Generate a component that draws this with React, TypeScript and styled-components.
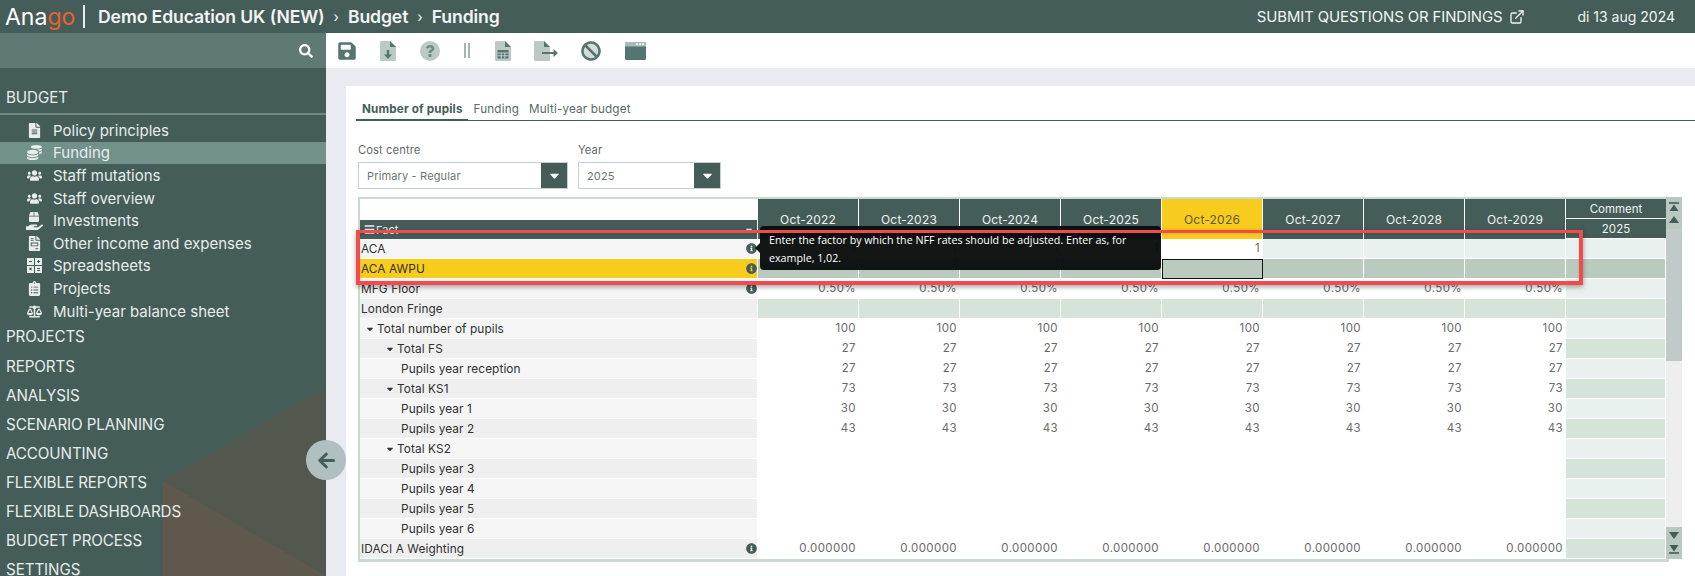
import React from "react";
import styled, { createGlobalStyle } from "styled-components";
import {
  FaSearch, FaFileAlt, FaCoins, FaUsers, FaFileInvoice, FaClipboardList, FaBalanceScale,
  FaSave, FaQuestion, FaBan, FaHandHolding, FaBox, FaInfoCircle, FaCaretDown, FaArrowLeft, FaBars,
} from "react-icons/fa";
import { FiExternalLink } from "react-icons/fi";

const GlobalStyle = createGlobalStyle`
  html, body { margin: 0; padding: 0; height: 100%; overflow: hidden; background: #fff; }
  * { box-sizing: border-box; }
  body { font-family: "Inter", "Liberation Sans", sans-serif; }
`;

const Page = styled.div`
  width: 1695px; height: 576px; display: flex; flex-direction: column; overflow: hidden; position: relative;
`;
const Header = styled.header`
  height: 33px; flex: none; background: #445d59; color: #f1f5f4; display: flex; align-items: center; padding-left: 5px;
`;
const Logo = styled.span`
  font-size: 23px; font-weight: 400; letter-spacing: 0; width: 69px; color: #fff;
`;
const LogoAccent = styled.span` color: #e8622c; `;
const LogoBar = styled.span` width: 2px; height: 23px; background: #e8eeec; margin: 0 13px 0 9px; `;
const Crumb = styled.span` font-size: 17.6px; font-weight: 600; letter-spacing: -0.1px; `;
const CrumbSep = styled.span` font-size: 14px; font-weight: 400; margin: 0 9px; `;
const HeaderRight = styled.div`
  margin-left: auto; display: flex; align-items: center; font-size: 14px; font-weight: 400; padding-right: 20px;
`;
const SubmitLink = styled.span` display: flex; align-items: center; gap: 7px; margin-right: 52px; letter-spacing: -0.1px; font-size: 14.9px; `;

const Body = styled.div` flex: 1; display: flex; min-height: 0; `;
const Sidebar = styled.aside`
  width: 326px; flex: none; background: #445d59; position: relative; overflow: hidden; color: #e6edeb;
`;
const DecoUpper = styled.div`
  position: absolute; inset: 0; background: #52584d;
  clip-path: polygon(326px 354px, 163px 448px, 326px 543px);
`;
const DecoLower = styled.div`
  position: absolute; inset: 0; background: #5f594d;
  clip-path: polygon(163px 448px, 326px 543px, 163px 543px);
`;
const SearchBar = styled.div`
  height: 35px; background: #5f7a74; display: flex; align-items: center; justify-content: flex-end; padding-right: 13px; color: #fff; font-size: 14px; position: relative;
`;
const Menu = styled.nav` position: relative; padding-top: 15px; `;
const SectionTitle = styled.div`
  font-size: 15.2px; height: 29.1px; line-height: 29px; padding-left: 6px; letter-spacing: -0.1px; font-weight: 400;
`;
const SectionRule = styled.div` height: 2px; background: #6f8a85; margin-top: 1px; margin-bottom: 4px; `;
const Item = styled.div<{ $active?: boolean }>`
  height: 22.6px; display: flex; align-items: center; font-size: 15px;
  background: ${(p) => (p.$active ? "#72918b" : "transparent")};
`;
const ItemIcon = styled.span`
  width: 53px; padding-left: 24px; display: flex; align-items: center; justify-content: center; font-size: 15px; flex: none; padding-right: 8px;
`;
const HandStack = styled.span` position: relative; width: 17px; height: 16px; display: block; `;
const HandBox = styled(FaBox)` position: absolute; left: 3px; top: -1px; font-size: 10px; `;
const HandPalm = styled(FaHandHolding)` position: absolute; left: 0; bottom: -2px; font-size: 17px; `;
const Collapse = styled.button`
  position: absolute; left: 306px; top: 440px; width: 40px; height: 40px; border-radius: 50%; border: 0; background: #b0bfbf; color: #445d59; font-size: 19px; display: flex; align-items: center; justify-content: center; z-index: 4; padding: 0;
`;

const Main = styled.main` flex: 1; display: flex; flex-direction: column; min-width: 0; `;
const Toolbar = styled.div` height: 35px; flex: none; background: #fff; display: flex; align-items: center; `;
const ToolSlot = styled.span<{ $x: number; $w: number }>`
  margin-left: ${(p) => p.$x}px; width: ${(p) => p.$w}px; display: flex; justify-content: center; align-items: center; color: #557570;
`;
const QuestionDisc = styled.span`
  width: 20px; height: 20px; border-radius: 50%; background: #bccac6; color: #6f8a85; display: flex; align-items: center; justify-content: center; font-size: 12px;
`;
const BanDisc = styled.span`
  width: 20px; height: 20px; border-radius: 50%; background: #d3dedb; display: flex; align-items: center; justify-content: center;
`;
const Content = styled.div` flex: 1; background: #eaebf0; padding: 18px 0 0 20px; min-height: 0; `;
const Card = styled.div` background: #fff; height: 100%; padding: 16px 0 0 10px; `;
const Tabs = styled.div` display: flex; height: 19px; border-bottom: 1px solid #445d59; font-size: 11.7px; `;
const Tab = styled.div<{ $active?: boolean }>`
  height: 19px; padding: 0 4px 0 6px; line-height: 15px; color: #5a6a68; letter-spacing: 0.15px;
  ${(p) => p.$active && "font-weight: 700; color: #445d59; border-bottom: 2px solid #445d59; padding-right: 5px;"}
`;
const Filters = styled.div` display: flex; gap: 10px; margin: 22px 0 8px 2px; `;
const Filter = styled.div<{ $w: number }>` width: ${(p) => p.$w}px; `;
const FilterLabel = styled.div` font-size: 11.2px; color: #5f6b69; height: 19px; line-height: 15px; letter-spacing: 0.1px; `;
const Select = styled.div`
  height: 27px; border: 1px solid #c5d0d3; display: flex; align-items: center; justify-content: space-between; font-size: 11px; color: #6a7573; padding-left: 8px; letter-spacing: 0.15px;
`;
const SelectBtn = styled.span`
  width: 26px; height: 25px; background: #445d59; color: #fff; display: flex; align-items: center; justify-content: center; font-size: 15px;
`;

const Frame = styled.div`
  margin-left: 2px; width: 1311px; position: relative; border: solid #c9dace; border-width: 2px 3px 3px 2px; background: #fff;
`;
const Grid = styled.div`
  display: grid; grid-template-columns: 398px repeat(8, 101px) 100px; grid-auto-rows: 20px; font-size: 11.8px;
`;
const FactHead = styled.div`
  grid-row: 1 / span 2; display: flex; flex-direction: column; justify-content: flex-end; border-right: 1px solid #fff;
`;
const FactBar = styled.div`
  height: 19px; background: #445d59; color: #eef3f1; font-size: 11px; display: flex; align-items: center; padding: 0 3px 0 4px; justify-content: space-between;
`;
const FactName = styled.span` display: flex; align-items: center; gap: 1px; `;
const Month = styled.div<{ $hl?: boolean }>`
  grid-row: 1 / span 2; background: ${(p) => (p.$hl ? "#f8cc1c" : "#445d59")}; color: ${(p) => (p.$hl ? "#5e5a2a" : "#eef3f1")};
  display: flex; align-items: center; justify-content: center; border-right: 1px solid #fff; font-size: 12px; letter-spacing: 0.2px;
`;
const CommentHead = styled.div`
  background: #445d59; color: #eef3f1; display: flex; align-items: center; justify-content: center; font-size: 11.5px; border-bottom: 1px solid #fff; height: 20px;
`;
const Label = styled.div<{ $tone: string; $indent: number }>`
  background: ${(p) => p.$tone}; border-right: 1px solid #fff; border-bottom: 1px solid #fff; color: #2f2f2f; display: flex; align-items: center; padding-left: ${(p) => p.$indent}px; padding-right: 0; position: relative; letter-spacing: 0.1px;
`;
const Caret = styled(FaCaretDown)` font-size: 10px; margin-right: 2px; margin-left: -2px; color: #333; flex: none; `;
const Info = styled(FaInfoCircle)` margin-left: auto; font-size: 11px; color: #445d59; flex: none; `;
const Cell = styled.div<{ $bg: string; $selected?: boolean }>`
  background: ${(p) => p.$bg}; border-right: 1px solid #fff; border-bottom: 1px solid #fff; text-align: right; padding-right: 2px; line-height: 19px; color: #6a6a6a; font-size: 11.5px; letter-spacing: 0.4px;
  ${(p) => p.$selected && "outline: 1px solid #111; outline-offset: -1px;"}
`;

const Scrollbar = styled.div`
  position: absolute; left: 1306px; top: -2px; width: 16px; bottom: 0; background: #eee; display: flex; flex-direction: column; color: #445d59; font-size: 0;
`;
const ThumbTop = styled.div` height: 164px; background: #c0cbc9; display: flex; flex-direction: column; flex: none; `;
const ScrollCaps = styled.div<{ $h: number }>` height: ${(p) => p.$h}px; background: #b9c9c0; display: flex; flex-direction: column; align-items: center; justify-content: space-around; flex: none; padding: 3px 0; `;
const Spacer = styled.div` flex: 1; `;

const Tooltip = styled.div`
  position: absolute; left: 400px; top: 27px; width: 401px; height: 44px; background: rgba(10, 12, 12, 0.96); color: #fff; font-family: "Open Sans", sans-serif; font-size: 10.7px; line-height: 18px; padding: 5px 8px 0 9px; border-radius: 4px; z-index: 2;
  &::before { content: ""; position: absolute; left: -5px; top: 17px; border: 5px solid transparent; border-left: 0; border-right-color: rgba(10, 12, 12, 0.96); }
`;
const RedBox = styled.div`
  position: absolute; left: -4px; top: 31px; width: 1227px; height: 55px; border: solid #f24b4b; border-width: 3px 4px 4px 4px; box-shadow: 0 2px 5px rgba(0,0,0,0.35), inset 0 1px 3px rgba(0,0,0,0.12); z-index: 3; pointer-events: none;
`;

const months = ["Oct-2022", "Oct-2023", "Oct-2024", "Oct-2025", "Oct-2026", "Oct-2027", "Oct-2028", "Oct-2029"];
const E1 = "#e8f1ed", D1 = "#d5e3d9", G1 = "#bacabf";

type Row = { name: string; indent: number; caret?: boolean; info?: boolean; hl?: boolean; val: string; bg?: string };
const rows: Row[] = [
  { name: "ACA", indent: 1, info: true, val: "1" },
  { name: "ACA AWPU", indent: 1, info: true, hl: true, val: "", bg: G1 },
  { name: "MFG Floor", indent: 1, info: true, val: "0.50%" },
  { name: "London Fringe", indent: 1, val: "", bg: D1 },
  { name: "Total number of pupils", indent: 7, caret: true, val: "100" },
  { name: "Total FS", indent: 27, caret: true, val: "27" },
  { name: "Pupils year reception", indent: 41, val: "27" },
  { name: "Total KS1", indent: 27, caret: true, val: "73" },
  { name: "Pupils year 1", indent: 41, val: "30" },
  { name: "Pupils year 2", indent: 41, val: "43" },
  { name: "Total KS2", indent: 27, caret: true, val: "" },
  { name: "Pupils year 3", indent: 41, val: "" },
  { name: "Pupils year 4", indent: 41, val: "" },
  { name: "Pupils year 5", indent: 41, val: "" },
  { name: "Pupils year 6", indent: 41, val: "" },
  { name: "IDACI A Weighting", indent: 1, info: true, val: "0.000000" },
];

function cellBg(r: number, c: number, row: Row): string {
  if (r === 0) return c < 5 ? "#fff" : E1;
  return row.bg ?? "#fff";
}
function cellValue(r: number, c: number, row: Row): string {
  if (r === 0 && c >= 5) return "";
  return row.val;
}
function commentBg(r: number, row: Row): string {
  if (row.bg) return row.bg;
  return r % 2 === 0 ? E1 : D1;
}

const FileDown = () => (
  <svg width="16" height="20" viewBox="0 0 16 20"><path d="M0 1a1 1 0 0 1 1-1h9l6 6v13a1 1 0 0 1-1 1H1a1 1 0 0 1-1-1z" fill="#bccac6"/><path d="M10 0l6 6h-6z" fill="#557570"/><path d="M6.8 9h2.4v4.5H12L8 18l-4-4.5h2.8z" fill="#557570"/></svg>
);
const FileCalc = () => (
  <svg width="16" height="20" viewBox="0 0 16 20"><path d="M0 1a1 1 0 0 1 1-1h9l6 6v13a1 1 0 0 1-1 1H1a1 1 0 0 1-1-1z" fill="#bccac6"/><path d="M10 0l6 6h-6z" fill="#557570"/><path d="M2.5 9h11v8.5h-11z" fill="#557570"/><path d="M2.5 12h11M2.5 14.8h11M6.2 12v5.5M9.8 12v5.5" stroke="#d8e2df" strokeWidth="0.8"/></svg>
);
const FileOut = () => (
  <svg width="24" height="20" viewBox="0 0 24 20"><path d="M0 1a1 1 0 0 1 1-1h9l6 6v13a1 1 0 0 1-1 1H1a1 1 0 0 1-1-1z" fill="#bccac6"/><path d="M10 0l6 6h-6z" fill="#557570"/><path d="M8 11h11.5V8l4.5 4-4.5 4v-3H8z" fill="#557570"/></svg>
);
const Bars = () => (
  <svg width="6" height="15" viewBox="0 0 6 15"><path d="M1 0v15M5 0v15" stroke="#7f9692" strokeWidth="1.4"/></svg>
);
const WindowIcon = () => (
  <svg width="21" height="18" viewBox="0 0 21 18"><rect x="0" y="0" width="21" height="18" rx="1.5" fill="#557570"/><path d="M0 1.5A1.5 1.5 0 0 1 1.5 0h18A1.5 1.5 0 0 1 21 1.5V4.5H0z" fill="#a9bab6"/><circle cx="12" cy="2.2" r="1" fill="#fff"/><circle cx="15" cy="2.2" r="1" fill="#fff"/><circle cx="18" cy="2.2" r="1" fill="#fff"/></svg>
);
const GridCalc = () => (
  <svg width="15" height="15" viewBox="0 0 15 15"><path d="M0 0h7v7H0zM8 0h7v7H8zM0 8h7v7H0zM8 8h7v7H8z" fill="currentColor"/><path d="M2 3h3v1H2zM10 3h3v1h-3zM11 2h1v3h-1zM2.2 10.2l.7-.7 2 2-.7.7zM4.2 9.5l.7.7-2 2-.7-.7zM10 10h3v1h-3zM10 12h3v1h-3z" fill="#445d59"/></svg>
);
const ScrollEnd = ({ up }: { up?: boolean }) => (
  <svg width="12" height="10" viewBox="0 0 12 10"><g transform={up ? "" : "translate(0 10) scale(1 -1)"}><path d="M1 1h10" stroke="#445d59" strokeWidth="1.6"/><path d="M6 2.5l4.5 6.5h-9z" fill="#445d59"/></g></svg>
);
const ScrollArrow = ({ up }: { up?: boolean }) => (
  <svg width="12" height="8" viewBox="0 0 12 8"><path d={up ? "M6 0l5 7H1z" : "M6 7L1 0h10z"} fill="#445d59"/></svg>
);

const sideItems: { name: string; icon: React.ReactNode; active?: boolean }[] = [
  { name: "Policy principles", icon: <FaFileAlt /> },
  { name: "Funding", icon: <FaCoins />, active: true },
  { name: "Staff mutations", icon: <FaUsers /> },
  { name: "Staff overview", icon: <FaUsers /> },
  { name: "Investments", icon: <HandStack><HandBox /><HandPalm /></HandStack> },
  { name: "Other income and expenses", icon: <FaFileInvoice /> },
  { name: "Spreadsheets", icon: <GridCalc /> },
  { name: "Projects", icon: <FaClipboardList /> },
  { name: "Multi-year balance sheet", icon: <FaBalanceScale /> },
];
const sections = ["PROJECTS", "REPORTS", "ANALYSIS", "SCENARIO PLANNING", "ACCOUNTING", "FLEXIBLE REPORTS", "FLEXIBLE DASHBOARDS", "BUDGET PROCESS", "SETTINGS"];

export default function App() {
  return (
    <Page>
      <GlobalStyle />
      <Header>
        <Logo>Ana<LogoAccent>go</LogoAccent></Logo>
        <LogoBar />
        <Crumb>Demo Education UK (NEW)</Crumb>
        <CrumbSep>›</CrumbSep>
        <Crumb>Budget</Crumb>
        <CrumbSep>›</CrumbSep>
        <Crumb>Funding</Crumb>
        <HeaderRight>
          <SubmitLink>SUBMIT QUESTIONS OR FINDINGS <FiExternalLink size={16} /></SubmitLink>
          <span>di 13 aug 2024</span>
        </HeaderRight>
      </Header>
      <Body>
        <Sidebar>
          <DecoUpper />
          <DecoLower />
          <SearchBar><FaSearch /></SearchBar>
          <Menu>
            <SectionTitle>BUDGET</SectionTitle>
            <SectionRule />
            {sideItems.map((it) => (
              <Item key={it.name} $active={it.active}>
                <ItemIcon>{it.icon}</ItemIcon>
                {it.name}
              </Item>
            ))}
            {sections.map((s) => (
              <SectionTitle key={s}>{s}</SectionTitle>
            ))}
          </Menu>
        </Sidebar>
        <Collapse aria-label="Collapse"><FaArrowLeft /></Collapse>
        <Main>
          <Toolbar>
            <ToolSlot $x={11} $w={20}><FaSave size={20} /></ToolSlot>
            <ToolSlot $x={23} $w={16}><FileDown /></ToolSlot>
            <ToolSlot $x={23} $w={21}><QuestionDisc><FaQuestion /></QuestionDisc></ToolSlot>
            <ToolSlot $x={24} $w={6}><Bars /></ToolSlot>
            <ToolSlot $x={25} $w={16}><FileCalc /></ToolSlot>
            <ToolSlot $x={23} $w={24}><FileOut /></ToolSlot>
            <ToolSlot $x={23} $w={20}><BanDisc><FaBan size={20} /></BanDisc></ToolSlot>
            <ToolSlot $x={23} $w={22}><WindowIcon /></ToolSlot>
          </Toolbar>
          <Content>
            <Card>
              <Tabs>
                <Tab $active>Number of pupils</Tab>
                <Tab>Funding</Tab>
                <Tab>Multi-year budget</Tab>
              </Tabs>
              <Filters>
                <Filter $w={210}>
                  <FilterLabel>Cost centre</FilterLabel>
                  <Select>Primary - Regular<SelectBtn><FaCaretDown /></SelectBtn></Select>
                </Filter>
                <Filter $w={143}>
                  <FilterLabel>Year</FilterLabel>
                  <Select>2025<SelectBtn><FaCaretDown /></SelectBtn></Select>
                </Filter>
              </Filters>
              <Frame>
                <Grid>
                  <FactHead>
                    <FactBar>
                      <FactName><FaBars size={11} />Fact</FactName>
                      <FaCaretDown size={10} />
                    </FactBar>
                  </FactHead>
                  {months.map((m) => (
                    <Month key={m} $hl={m === "Oct-2026"}>{m}</Month>
                  ))}
                  <CommentHead>Comment</CommentHead>
                  <CommentHead>2025</CommentHead>
                  {rows.map((row, r) => (
                    <React.Fragment key={row.name}>
                      <Label $indent={row.indent} $tone={row.hl ? "#f8cc1c" : r % 2 === 0 ? "#f5f5f5" : "#efefef"}>
                        {row.caret && <Caret />}
                        {row.name}
                        {row.info && <Info />}
                      </Label>
                      {months.map((m, c) => (
                        <Cell key={m} $bg={cellBg(r, c, row)} $selected={row.hl && c === 4}>{cellValue(r, c, row)}</Cell>
                      ))}
                      <Cell $bg={commentBg(r, row)} />
                    </React.Fragment>
                  ))}
                </Grid>
                <Tooltip>Enter the factor by which the NFF rates should be adjusted. Enter as, for example, 1,02.</Tooltip>
                <RedBox />
                <Scrollbar>
                  <ThumbTop>
                    <ScrollCaps $h={32}>
                      <ScrollEnd up />
                      <ScrollArrow up />
                    </ScrollCaps>
                  </ThumbTop>
                  <Spacer />
                  <ScrollCaps $h={32}>
                    <ScrollArrow />
                    <ScrollEnd />
                  </ScrollCaps>
                </Scrollbar>
              </Frame>
            </Card>
          </Content>
        </Main>
      </Body>
    </Page>
  );
}
